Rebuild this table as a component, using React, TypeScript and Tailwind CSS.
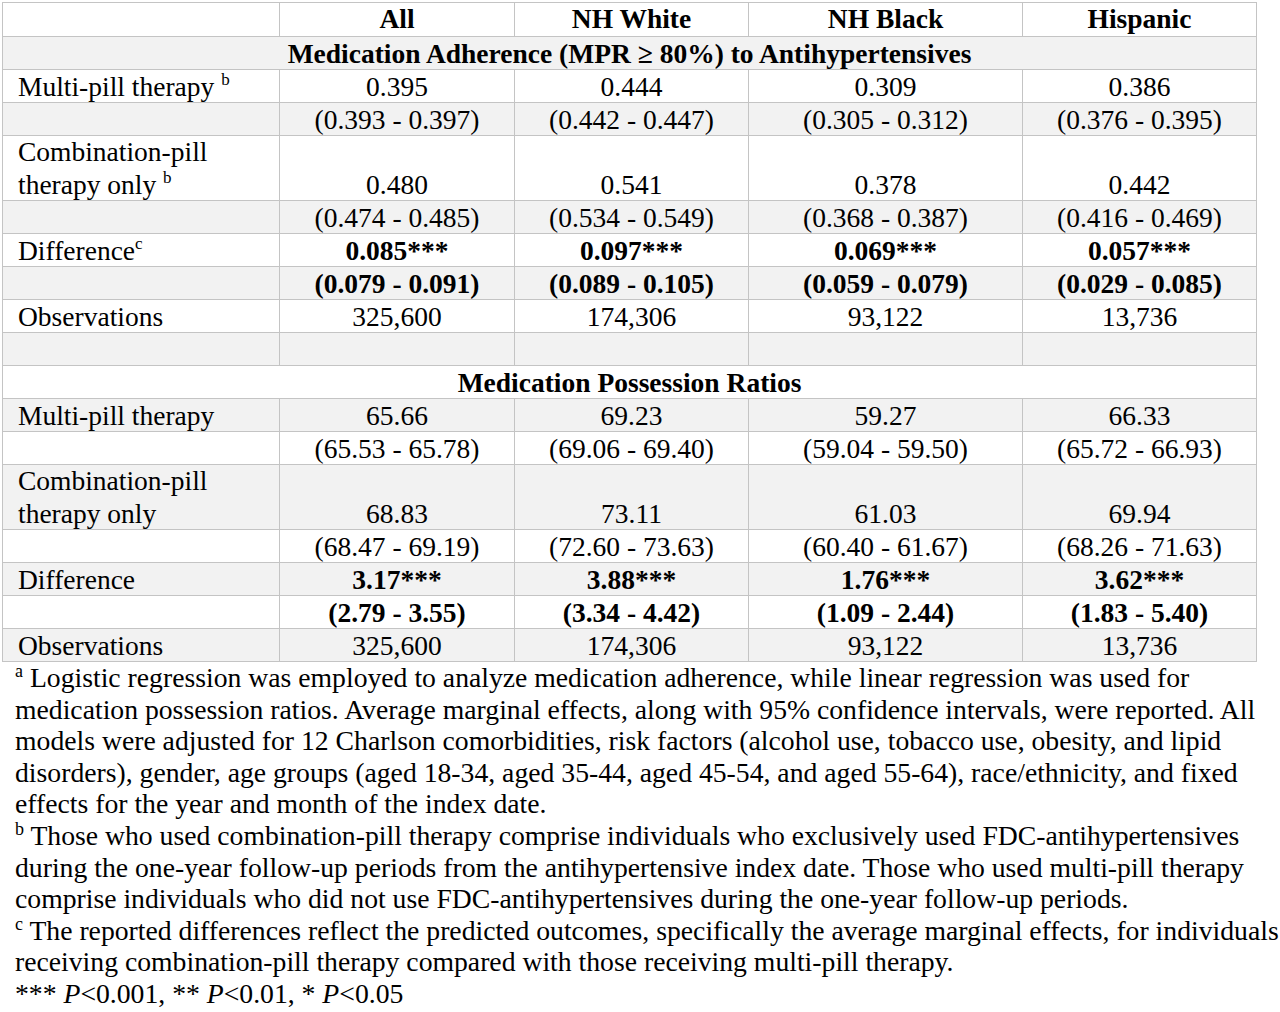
import React from "react";

type Row = {
  kind: "head" | "section" | "data" | "empty";
  label?: React.ReactNode;
  vals?: string[];
  bold?: boolean;
  shaded?: boolean;
  tall?: boolean;
  text?: string;
};

const sup = (s: string) => (
  <span className="text-[17px] align-top leading-none">{s}</span>
);

const combo = (note?: string) => (
  <>
    <div className="mb-[2px]">Combination-pill</div>
    <div>
      therapy only{note ? <> {sup(note)}</> : null}
    </div>
  </>
);

const rows: Row[] = [
  { kind: "head" },
  { kind: "section", text: "Medication Adherence (MPR ≥ 80%) to Antihypertensives", shaded: true },
  { kind: "data", label: <>Multi-pill therapy {sup("b")}</>, vals: ["0.395", "0.444", "0.309", "0.386"] },
  { kind: "data", vals: ["(0.393 - 0.397)", "(0.442 - 0.447)", "(0.305 - 0.312)", "(0.376 - 0.395)"], shaded: true },
  { kind: "data", label: combo("b"), tall: true, vals: ["0.480", "0.541", "0.378", "0.442"] },
  { kind: "data", vals: ["(0.474 - 0.485)", "(0.534 - 0.549)", "(0.368 - 0.387)", "(0.416 - 0.469)"], shaded: true },
  { kind: "data", label: <>Difference{sup("c")}</>, bold: true, vals: ["0.085***", "0.097***", "0.069***", "0.057***"] },
  { kind: "data", bold: true, vals: ["(0.079 - 0.091)", "(0.089 - 0.105)", "(0.059 - 0.079)", "(0.029 - 0.085)"], shaded: true },
  { kind: "data", label: "Observations", vals: ["325,600", "174,306", "93,122", "13,736"] },
  { kind: "empty", shaded: true },
  { kind: "section", text: "Medication Possession Ratios" },
  { kind: "data", label: "Multi-pill therapy", vals: ["65.66", "69.23", "59.27", "66.33"], shaded: true },
  { kind: "data", vals: ["(65.53 - 65.78)", "(69.06 - 69.40)", "(59.04 - 59.50)", "(65.72 - 66.93)"] },
  { kind: "data", label: combo(), tall: true, vals: ["68.83", "73.11", "61.03", "69.94"], shaded: true },
  { kind: "data", vals: ["(68.47 - 69.19)", "(72.60 - 73.63)", "(60.40 - 61.67)", "(68.26 - 71.63)"] },
  { kind: "data", label: "Difference", bold: true, vals: ["3.17***", "3.88***", "1.76***", "3.62***"], shaded: true },
  { kind: "data", bold: true, vals: ["(2.79 - 3.55)", "(3.34 - 4.42)", "(1.09 - 2.44)", "(1.83 - 5.40)"] },
  { kind: "data", label: "Observations", vals: ["325,600", "174,306", "93,122", "13,736"], shaded: true },
];

const cell = "border border-[#c4c4c4] align-bottom p-0 leading-[31px]";

function TableRow({ row }: { row: Row }) {
  const bg = row.shaded ? "bg-[#f2f2f2]" : "bg-white";
  const h = row.tall ? "h-[65px]" : "h-[33px]";
  if (row.kind === "head") {
    return (
      <tr className={`${bg} ${h}`}>
        <td className={cell} />
        {["All", "NH White", "NH Black", "Hispanic"].map((t) => (
          <td key={t} className={`${cell} text-center font-bold pb-[2px]`}>
            {t}
          </td>
        ))}
      </tr>
    );
  }
  if (row.kind === "section") {
    return (
      <tr className={`${bg} ${h}`}>
        <td colSpan={5} className={`${cell} text-center font-bold`}>
          {row.text}
        </td>
      </tr>
    );
  }
  if (row.kind === "empty") {
    return (
      <tr className={`${bg} ${h}`}>
        {[0, 1, 2, 3, 4].map((i) => (
          <td key={i} className={cell} />
        ))}
      </tr>
    );
  }
  return (
    <tr className={`${bg} ${h}`}>
      <td className={`${cell} pl-[15px] text-left`}>{row.label}</td>
      {row.vals!.map((v, i) => (
        <td key={i} className={`${cell} text-center ${row.bold ? "font-bold" : ""}`}>
          {v}
        </td>
      ))}
    </tr>
  );
}

const fsup = (s: string) => (
  <span className="text-[18px] align-top leading-none">{s}</span>
);

const notes: React.ReactNode[] = [
  <>{fsup("a")} Logistic regression was employed to analyze medication adherence, while linear regression was used for</>,
  "medication possession ratios. Average marginal effects, along with 95% confidence intervals, were reported. All",
  "models were adjusted for 12 Charlson comorbidities, risk factors (alcohol use, tobacco use, obesity, and lipid",
  "disorders), gender, age groups (aged 18-34, aged 35-44, aged 45-54, and aged 55-64), race/ethnicity, and fixed",
  "effects for the year and month of the index date.",
  <>{fsup("b")} Those who used combination-pill therapy comprise individuals who exclusively used FDC-antihypertensives</>,
  "during the one-year follow-up periods from the antihypertensive index date. Those who used multi-pill therapy",
  "comprise individuals who did not use FDC-antihypertensives during the one-year follow-up periods.",
  <>{fsup("c")} The reported differences reflect the predicted outcomes, specifically the average marginal effects, for individuals</>,
  "receiving combination-pill therapy compared with those receiving multi-pill therapy.",
  <>*** <i>P</i>&lt;0.001, ** <i>P</i>&lt;0.01, * <i>P</i>&lt;0.05</>,
];

export default function App() {
  return (
    <div
      className="w-[1280px] h-[1012px] bg-white text-black overflow-hidden"
      style={{ fontFamily: '"Liberation Serif", "Times New Roman", serif' }}
    >
      <table className="table-fixed border-collapse ml-[2px] mt-[2px] text-[27.5px]">
        <colgroup>
          <col className="w-[277px]" />
          <col className="w-[235px]" />
          <col className="w-[234px]" />
          <col className="w-[274px]" />
          <col className="w-[234px]" />
        </colgroup>
        <tbody>
          {rows.map((r, i) => (
            <TableRow key={i} row={r} />
          ))}
        </tbody>
      </table>
      <div className="pl-[15px] text-[27.7px] leading-[31.6px]">
        {notes.map((n, i) => (
          <div key={i} className="whitespace-nowrap">
            {n}
          </div>
        ))}
      </div>
    </div>
  );
}
